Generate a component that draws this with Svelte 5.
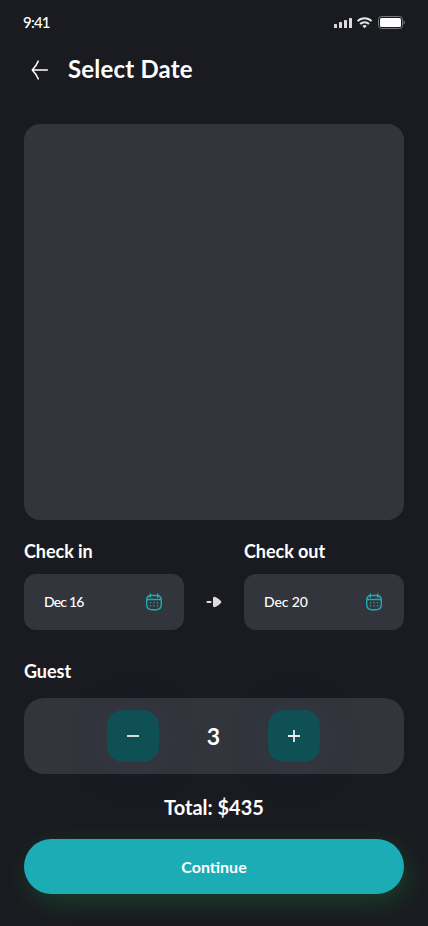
<script>
  let nights = [
    { side: "in", label: "Check in", date: "Dec 16" },
    { side: "out", label: "Check out", date: "Dec 20" },
  ];
  let guests = 3;
  let total = 435;

  function remove() {
    if (guests > 1) guests -= 1;
  }

  function add() {
    guests += 1;
  }
</script>

<div class="screen">
  <div class="status">
    <span class="time">9:41</span>
    <svg width="72" height="14" viewBox="0 0 72 14">
      <g fill="#dcdcdc">
        <rect x="1" y="9" width="3" height="4" rx=".6" />
        <rect x="6" y="7" width="3" height="6" rx=".6" />
        <rect x="11" y="5" width="3" height="8" rx=".6" />
        <rect x="16" y="3" width="3" height="10" rx=".6" />
      </g>
      <g fill="none" stroke="#e6e6e6" stroke-width="2">
        <path d="M24.6 6.1a10 10 0 0 1 14 0" />
        <path d="M27.2 9a6.3 6.3 0 0 1 8.8 0" />
      </g>
      <path d="M29.4 11a3.2 3.2 0 0 1 4.4 0l-2.2 2.2z" fill="#e6e6e6" />
      <rect x="45.5" y="1.5" width="24" height="12" rx="3" fill="none" stroke="#77787b" />
      <rect x="47" y="3" width="21" height="9" rx="1.5" fill="#fff" />
      <path d="M70.7 5.6v4c.7-.4 1.2-1.1 1.2-2s-.5-1.6-1.2-2z" fill="#77787b" />
    </svg>
  </div>

  <header>
    <button class="back" aria-label="Back">
      <svg width="18" height="20" viewBox="0 0 18 20" fill="none" stroke="#fff" stroke-width="1.6" stroke-linecap="round" stroke-linejoin="round">
        <path d="M16.3 10H1.8M7.2 1.200Q5.200 6 1.300 10Q5.200 14 7.200 18.800" />
      </svg>
    </button>
    <h1>Select Date</h1>
  </header>

  <div class="calendar"></div>

  <div class="dates">
    {#each nights as night, i}
      {#if i > 0}
        <svg class="arrow" width="16" height="12" viewBox="0 0 16 12">
          <path d="M1.500 6h3" stroke="#dcdcdc" stroke-width="2.200" stroke-linecap="round" />
          <path d="M7 2.500c0-1.300 1-2 2.200-1.500 2.200.8 4.400 2.400 5.900 4.200.4.500.4 1.100 0 1.600-1.500 1.800-3.700 3.400-5.900 4.200C8 11.500 7 10.800 7 9.500z" fill="#dcdcdc" />
        </svg>
      {/if}
      <div class="field">
        <h2>{night.label}</h2>
        <button class="date">
          <span class={night.side}>{night.date}</span>
          <svg width="18" height="18" viewBox="0 0 18 18" fill="none" stroke="#1cacb8" stroke-width="1.400" stroke-linecap="round">
            <path d="M5.300 2.500h7.400c2.300.4 3.600 1.900 3.600 4.500v4.300c0 3.700-1.700 5.500-5.300 5.500H7c-3.600 0-5.300-1.800-5.300-5.500V7c0-2.600 1.300-4.100 3.600-4.500z" />
            <path d="M5.300 1v3.200M12.700 1v3.200M1.900 6.500h14.200" />
            <path d="M5.500 9.700h.01M9 9.700h.01M12.500 9.700h.01M5.500 12.700h.01M9 12.700h.01M12.500 12.700h.01" />
          </svg>
        </button>
      </div>
    {/each}
  </div>

  <h2 class="guest">Guest</h2>
  <div class="counter">
    <button class="step" aria-label="Remove guest" on:click={remove}>
      <svg width="14" height="14" viewBox="0 0 14 14" stroke="#e8eeee" stroke-width="1.800">
        <path d="M1 7h12" />
      </svg>
    </button>
    <span class="count">{guests}</span>
    <button class="step" aria-label="Add guest" on:click={add}>
      <svg width="14" height="14" viewBox="0 0 14 14" stroke="#e8eeee" stroke-width="1.800">
        <path d="M1 7h12M7 1v12" />
      </svg>
    </button>
  </div>

  <p class="total">Total: ${total}</p>
  <button class="continue">Continue</button>
</div>

<style>
  :global(body) {
    background: #1a1b20;
  }

  .screen {
    box-sizing: border-box;
    width: 428px;
    height: 926px;
    padding: 0 24px;
    overflow: hidden;
    display: flex;
    flex-direction: column;
    background: #1a1b20;
    color: #fff;
    font-family: Lato, sans-serif;
  }

  h1, h2, p {
    margin: 0;
  }

  button {
    padding: 0;
    border: 0;
    background: none;
    color: inherit;
    font-family: inherit;
    cursor: pointer;
  }

  svg {
    display: block;
    flex: none;
  }

  .status {
    height: 44px;
    display: flex;
    align-items: center;
    justify-content: space-between;
    margin: 0 -1px;
  }

  .time {
    font-size: 15px;
    font-weight: 500;
    letter-spacing: -0.8px;
  }

  header {
    height: 50px;
    display: flex;
    align-items: center;
  }

  .back {
    width: 44px;
    padding: 2px 0 0 7px;
    box-sizing: border-box;
  }

  h1 {
    font-size: 24px;
    line-height: 30px;
    font-weight: 700;
    letter-spacing: 0.2px;
    white-space: nowrap;
  }

  .calendar {
    height: 396px;
    margin-top: 30px;
    border-radius: 16px;
    background: #33353c;
  }

  .dates {
    display: flex;
    align-items: flex-end;
    justify-content: space-between;
    margin-top: 20px;
  }

  .field {
    width: 160px;
  }

  h2 {
    font-size: 18px;
    line-height: 22px;
    font-weight: 700;
    letter-spacing: -0.05px;
  }

  .date {
    box-sizing: border-box;
    width: 160px;
    height: 56px;
    margin-top: 12px;
    padding: 0 21px 0 20px;
    display: flex;
    align-items: center;
    justify-content: space-between;
    border-radius: 12px;
    background: #33353c;
    font-size: 14px;
    font-weight: 500;
  }

  .date span {
    padding-bottom: 1px;
    white-space: nowrap;
  }

  /* the digit 1 runs wide in this face */
  .in {
    letter-spacing: -0.8px;
  }

  .out {
    letter-spacing: -0.1px;
  }

  .arrow {
    margin-bottom: 22px;
  }

  .guest {
    margin-top: 30px;
  }

  .counter {
    height: 76px;
    margin-top: 16px;
    padding-right: 1px;
    display: flex;
    align-items: center;
    justify-content: center;
    border-radius: 20px;
    background: #33353c;
    box-sizing: border-box;
  }

  .step {
    width: 52px;
    height: 52px;
    display: flex;
    align-items: center;
    justify-content: center;
    border-radius: 16px;
    background: #0e5054;
    box-shadow: 0 4px 60px rgba(50, 50, 190, 0.08);
  }

  .count {
    width: 109px;
    padding-bottom: 1px;
    box-sizing: border-box;
    text-align: center;
    font-size: 23px;
    font-weight: 700;
  }

  .total {
    height: 24px;
    margin-top: 21px;
    text-align: center;
    font-size: 20px;
    line-height: 24px;
    font-weight: 700;
  }

  .continue {
    height: 55px;
    margin-top: 20px;
    padding-bottom: 1px;
    border-radius: 28px;
    background: #1cacb6;
    box-shadow: 4px 8px 24px rgba(23, 206, 82, 0.2);
    font-size: 16px;
    font-weight: 700;
  }
</style>
